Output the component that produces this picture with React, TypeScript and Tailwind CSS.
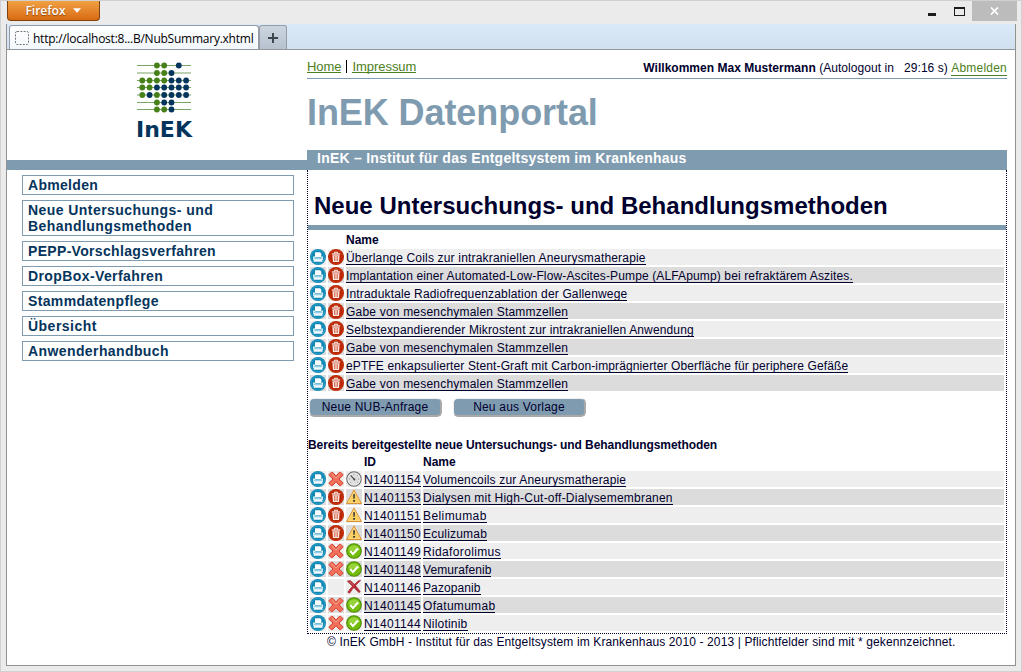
import React from "react";

const Printer = () => (
  <svg width="16" height="16" viewBox="0 0 16 16" className="block">
    <circle cx="8" cy="8" r="8" fill="#1186b3" />
    <circle cx="8" cy="8" r="6.9" fill="none" stroke="#2ba3cc" strokeWidth="0.8" />
    <path d="M5 3.2h5l1.3 1.3v3.6H5z" fill="#fff" />
    <path d="M3 7.4h2v1h6.3v-1h1.8v3.6H3z" fill="#d5edf6" />
    <path d="M3.6 9.6h8.8" stroke="#7fc4de" strokeWidth="0.8" />
    <path d="M4 10.8h8.2l.5 2H3.5z" fill="#f4fbfd" />
  </svg>
);

const Trash = () => (
  <svg width="16" height="16" viewBox="0 0 16 16" className="block">
    <circle cx="8" cy="8" r="8" fill="#b92505" />
    <circle cx="8" cy="8" r="7" fill="none" stroke="#cf3f17" strokeWidth="0.6" />
    <path d="M6.4 4.4V3.2h3.2v1.2" fill="none" stroke="#fff" strokeWidth="1" />
    <path d="M3.8 4.4h8.4v1.2H3.8z" fill="#fff" />
    <path d="M4.4 6.2h7.2l-.6 6.8H5z" fill="#fbe9e4" />
    <path d="M6.4 7l.2 5M8 7v5M9.6 7l-.2 5" stroke="#d4644a" strokeWidth="0.8" />
  </svg>
);

const Cross = () => (
  <svg width="16" height="16" viewBox="0 0 16 16" className="block">
    <path
      d="M1 3.6L3.4 1.2 5 1.6 8 5.2 11 1.6 12.6 1.2 15 3.6 14.4 5 10.9 8 14.4 11 15 12.4 12.6 14.8 11 14.2 8 10.8 5 14.2 3.4 14.8 1 12.4 1.6 11 5.1 8 1.6 5z"
      fill="#f0705c"
      stroke="#d8452f"
      strokeWidth="1"
      strokeLinejoin="round"
    />
    <path d="M3.5 3L8 7l4.5-4" fill="none" stroke="#f9a596" strokeWidth="0.8" />
  </svg>
);

const Gauge = () => (
  <svg width="16" height="16" viewBox="0 0 16 16" className="block">
    <circle cx="8" cy="8" r="7.2" fill="#dedede" stroke="#6f6f6f" strokeWidth="1.2" />
    <circle cx="8" cy="8" r="6.1" fill="none" stroke="#f6f6f6" strokeWidth="0.7" />
    <path d="M4.6 4.3L8.5 8.6" stroke="#4a4a4a" strokeWidth="1.2" />
    <circle cx="8.4" cy="8.5" r="1" fill="#444" />
    <path d="M8 2.6v1.1M13.2 8h-1.1M2.8 8h1.1M11.6 4.4l-.7.7M4.4 11.6l.7-.7M11.6 11.6l-.7-.7" stroke="#777" strokeWidth="0.8" />
  </svg>
);

const Warning = () => (
  <svg width="16" height="16" viewBox="0 0 16 16" className="block">
    <path d="M8 1.2L15.3 14.4H.7z" fill="#fccf5d" stroke="#dd9233" strokeWidth="1.1" strokeLinejoin="round" />
    <path d="M8 2.8L14 13.5H2z" fill="none" stroke="#fee6a4" strokeWidth="0.6" />
    <path d="M7.1 5.2h1.9l-.3 4.6H7.4zM7.1 10.9h1.9v1.8H7.1z" fill="#3c3c3c" />
  </svg>
);

const Check = () => (
  <svg width="16" height="16" viewBox="0 0 16 16" className="block">
    <circle cx="8" cy="8" r="7.3" fill="#74bd0c" stroke="#4c8d08" strokeWidth="1.1" />
    <path d="M2.2 7a6 6 0 0 1 11.6 0q-5.8 2.2-11.6 0z" fill="#96d43a" />
    <path d="M4.2 8l2.8 2.9 5-5.4" fill="none" stroke="#fff" strokeWidth="2.1" />
  </svg>
);

const Denied = () => (
  <svg width="16" height="16" viewBox="0 0 16 16" className="block">
    <path d="M1.4 2.2L4 1.6C6.5 3.2 11.5 8.4 14.2 12.8L13 13.6C9.6 10.4 5 5.6 1.4 2.2z" fill="#b3303a" stroke="#99212a" strokeWidth="0.7" strokeLinejoin="round" />
    <path d="M14.6 1.6L12.6 1.8C8.6 4.6 4.6 9.2 1.8 13.2L3.6 14.2C6.6 9.6 10 5.6 14.6 1.6z" fill="#c42b36" stroke="#a5222b" strokeWidth="0.7" strokeLinejoin="round" />
    <path d="M3.2 2.6C5 3.7 7 5.4 8 6.4" fill="none" stroke="#e08a8f" strokeWidth="0.6" />
  </svg>
);

const icons = { printer: Printer, trash: Trash, cross: Cross, gauge: Gauge, warning: Warning, check: Check, denied: Denied };
type IconName = keyof typeof icons;

const Logo = () => {
  const rows = ["  gg b ", "  ggb  ", "ggggbbb", "ggbbbbb", "gbgbbbb", "  gbb  ", "  ggb  "];
  const y = [3.5, 11, 18.5, 25.5, 33, 40.5, 47.5];
  return (
    <svg width="56" height="52" viewBox="0 0 56 52" className="block">
      {rows.map((row, r) => (
        <g key={r}>
          <path d={`M1 ${y[r]}h54`} stroke="#7ba468" strokeWidth="1.2" />
          {row.split("").map((c, i) =>
            c === " " ? null : <circle key={i} cx={6.3 + i * 7.3} cy={y[r]} r="2.9" fill={c === "g" ? "#468019" : "#05345c"} />
          )}
        </g>
      ))}
    </svg>
  );
};

const Cell = ({ icon, shade }: { icon?: IconName; shade: string }) => {
  const Icon = icon ? icons[icon] : null;
  return <div className={`h-4 w-4 shrink-0 ${shade}`}>{Icon && <Icon />}</div>;
};

const Link = ({ text, track }: { text: string; track: string }) => (
  <a className={`inline-block h-[15px] border-b border-[#00002e] leading-[17px] ${track}`}>{text}</a>
);

const shades = ["bg-[#eeeeee]", "bg-[#dcdcdc]"];

const drafts = [
  ["Überlange Coils zur intrakraniellen Aneurysmatherapie", "tracking-[0.18px]"],
  ["Implantation einer Automated-Low-Flow-Ascites-Pumpe (ALFApump) bei refraktärem Aszites.", "tracking-[0.13px]"],
  ["Intraduktale Radiofrequenzablation der Gallenwege", "tracking-[0.16px]"],
  ["Gabe von mesenchymalen Stammzellen", "tracking-[0.2px]"],
  ["Selbstexpandierender Mikrostent zur intrakraniellen Anwendung", "tracking-[0.135px]"],
  ["Gabe von mesenchymalen Stammzellen", "tracking-[0.2px]"],
  ["ePTFE enkapsulierter Stent-Graft mit Carbon-imprägnierter Oberfläche für periphere Gefäße", "tracking-[0.12px]"],
  ["Gabe von mesenchymalen Stammzellen", "tracking-[0.2px]"],
];

const submitted: { id: string; name: string; action?: IconName; state: IconName; track: string }[] = [
  { id: "N1401154", name: "Volumencoils zur Aneurysmatherapie", action: "cross", state: "gauge", track: "tracking-[0.17px]" },
  { id: "N1401153", name: "Dialysen mit High-Cut-off-Dialysemembranen", action: "trash", state: "warning", track: "tracking-[0.22px]" },
  { id: "N1401151", name: "Belimumab", action: "trash", state: "warning", track: "tracking-[0.42px]" },
  { id: "N1401150", name: "Eculizumab", action: "trash", state: "warning", track: "tracking-[0.2px]" },
  { id: "N1401149", name: "Ridaforolimus", action: "cross", state: "check", track: "tracking-[0.35px]" },
  { id: "N1401148", name: "Vemurafenib", action: "cross", state: "check", track: "tracking-[0.1px]" },
  { id: "N1401146", name: "Pazopanib", state: "denied", track: "tracking-[0.1px]" },
  { id: "N1401145", name: "Ofatumumab", action: "cross", state: "check", track: "tracking-[0.3px]" },
  { id: "N1401144", name: "Nilotinib", action: "cross", state: "check", track: "tracking-[0.2px]" },
];

const menu = [
  ["Abmelden", "tracking-[0.3px]"],
  ["Neue Untersuchungs- und Behandlungsmethoden", "tracking-[0.44px]"],
  ["PEPP-Vorschlagsverfahren", "tracking-[0.32px]"],
  ["DropBox-Verfahren", "tracking-[0.4px]"],
  ["Stammdatenpflege", "tracking-[0.35px]"],
  ["Übersicht", "tracking-[0.48px]"],
  ["Anwenderhandbuch", "tracking-[0.4px]"],
];

const Button = ({ text }: { text: string }) => (
  <button className="h-[19px] w-[133px] rounded-[5px] border border-r-2 border-b-2 border-t-[#f0f0f0] border-r-[#a9a9a9] border-b-[#a9a9a9] border-l-[#f0f0f0] bg-[#7f9bb0] text-center leading-4 tracking-[0.2px] whitespace-nowrap">
    {text}
  </button>
);

const TitleBar = () => (
  <div className="flex h-[23px] shrink-0 items-start justify-between pl-[6px]">
    <div className="flex h-5 w-[93px] items-center justify-center gap-[7px] rounded-b-[4px] border border-t-0 border-[#7c4310] bg-linear-to-b from-[#f0a142] to-[#d86a10] pr-px font-['Open_Sans',sans-serif] text-[12px] font-semibold text-white [text-shadow:0_1px_1px_#8a4508]">
      Firefox
      <svg width="8" height="5" viewBox="0 0 8 5"><path d="M0 .3h8L4 4.8z" fill="#fff" /></svg>
    </div>
    <div className="flex pr-1">
      <div className="flex h-5 w-[26px] items-end pb-[5px]"><div className="h-[3px] w-2 bg-[#1c1c1c]" /></div>
      <div className="mt-[6px] mr-[7px] h-[9px] w-[11px] border border-t-2 border-[#1c1c1c]" />
      <div className="flex h-5 w-[45px] items-center justify-center bg-[#bcbcbc]">
        <svg width="9" height="8" viewBox="0 0 9 8"><path d="M1 .5l7 7M8 .5l-7 7" stroke="#fff" strokeWidth="1.7" /></svg>
      </div>
    </div>
  </div>
);

const TabBar = () => (
  <div className="flex h-[26px] shrink-0 items-end border-b border-[#92979d] bg-linear-to-b from-[#dbe9f8] to-[#cfe0f0] pl-[2px]">
    <div className="flex h-6 w-[250px] items-center rounded-t-[3px] border border-b-0 border-[#969ca5] bg-linear-to-b from-white to-[#f3f8fd] pl-[5px] font-['Open_Sans',sans-serif] text-[12px] text-black">
      <svg width="14" height="14" viewBox="0 0 14 14" className="mr-1 shrink-0"><rect x=".5" y=".5" width="13" height="13" rx="1.5" fill="none" stroke="#777" strokeDasharray="2 1.3" /></svg>
      <span className="pt-0.5 tracking-[-0.24px] whitespace-nowrap">http://localhost:8...B/NubSummary.xhtml</span>
    </div>
    <div className="flex h-6 w-7 items-center justify-center rounded-t-[3px] border border-b-0 border-[#969ca5] bg-linear-to-b from-[#ccd5df] to-[#b7c2cf]">
      <svg width="10" height="10" viewBox="0 0 10 10"><path d="M0 5h10M5 0v10" stroke="#3f464e" strokeWidth="2" /></svg>
    </div>
  </div>
);

export default function App() {
  return (
    <div className="flex h-[672px] w-[1022px] flex-col overflow-hidden border border-[#d0d0d0] bg-[#ebebeb] font-['Liberation_Sans',Arial,sans-serif] text-[12px] text-[#00002e]">
      <TitleBar />
      <div className="mx-[5px] mb-[5px] flex min-h-0 flex-1 flex-col border border-t-0 border-[#929292] bg-white">
        <TabBar />
        <div className="flex min-h-0 flex-1">
          <aside className="w-[300px] shrink-0">
            <div className="flex h-[110px] flex-col items-start pt-3 pl-[129px]">
              <Logo />
              <div className="mt-[5px] font-['DejaVu_Sans',sans-serif] text-[22px] leading-[22px] font-bold text-[#05345c]">InEK</div>
            </div>
            <div className="h-[10px] bg-[#7f9bb0]" />
            <nav className="mt-[5px] ml-[15px] flex w-[272px] flex-col gap-[5px]">
              {menu.map(([label, track]) => (
                <a key={label} className={`border border-[#7f9bb0] py-px pr-10 pl-[5px] text-[14px] leading-4 font-bold text-[#05345c] ${track}`}>{label}</a>
              ))}
            </nav>
          </aside>
          <main className="w-[700px] shrink-0">
            <div className="flex h-[29px] items-start justify-between border-b border-[#7f9bb0] pt-[9px]">
              <div className="flex text-[13px] leading-4 tracking-[-0.05px] text-[#4c8022]">
                <a className="h-[14px] border-b">Home</a>
                <span className="mt-px mr-[5px] ml-[5px] h-[13px] w-px bg-black" />
                <a className="h-[14px] border-b">Impressum</a>
              </div>
              <div className="flex leading-[18px] whitespace-pre">
                <b className="tracking-[0.02px]">Willkommen Max Mustermann</b>
                <span className="tracking-[0.05px]"> (Autologout in   29:16 s) </span>
                <a className="h-[17px] border-b border-[#4c8022] tracking-[0.22px] text-[#4c8022]">Abmelden</a>
              </div>
            </div>
            <h1 className="h-[71px] pt-[13px] text-[36px] leading-[41px] font-bold tracking-[-0.08px] text-[#7f9bb0]">InEK Datenportal</h1>
            <div className="h-5 bg-[#7f9bb0] pl-[10px] text-[14px] leading-[17px] font-bold tracking-[0.24px] text-white">InEK – Institut für das Entgeltsystem im Krankenhaus</div>
            <section className="h-[464px] border border-t-0 border-dotted border-[#00002e]">
              <h2 className="h-[55px] pt-[22px] pl-[6px] text-[24px] leading-7 font-bold tracking-[0.01px]">Neue Untersuchungs- und Behandlungsmethoden</h2>
              <div className="h-[5px] bg-[#7f9bb0]" />
              <div className="mt-[2px] h-[17px] pl-[38px] leading-[17px] font-bold">Name</div>
              <div className="flex flex-col gap-[2px] pr-[2px] pl-[2px]">
                {drafts.map(([name, track], i) => (
                  <div key={i} className="flex h-4 gap-[2px]">
                    <Cell icon="printer" shade={shades[i % 2]} />
                    <Cell icon="trash" shade={shades[i % 2]} />
                    <div className={`flex-1 whitespace-nowrap ${shades[i % 2]}`}><Link text={name} track={track} /></div>
                  </div>
                ))}
              </div>
              <div className="mt-[7px] ml-[1px] flex gap-[11px]">
                <Button text="Neue NUB-Anfrage" />
                <Button text="Neu aus Vorlage" />
              </div>
              <div className="mt-5 h-[17px] leading-[17px] font-bold tracking-[-0.075px]">Bereits bereitgestellte neue Untersuchungs- und Behandlungsmethoden</div>
              <div className="flex h-[17px] pl-[56px] leading-[17px] font-bold">
                <span className="w-[59px]">ID</span>
                <span>Name</span>
              </div>
              <div className="flex flex-col gap-[2px] pr-[2px] pl-[2px]">
                {submitted.map((r, i) => (
                  <div key={r.id} className="flex h-4 gap-[2px]">
                    <Cell icon="printer" shade={shades[i % 2]} />
                    <Cell icon={r.action} shade={shades[i % 2]} />
                    <Cell icon={r.state} shade={shades[i % 2]} />
                    <div className={`w-[57px] shrink-0 ${shades[i % 2]}`}><Link text={r.id} track="tracking-[0.3px]" /></div>
                    <div className={`flex-1 whitespace-nowrap ${shades[i % 2]}`}><Link text={r.name} track={r.track} /></div>
                  </div>
                ))}
              </div>
            </section>
            <footer className="pl-5 leading-[17px] tracking-[0.125px] whitespace-nowrap">© InEK GmbH - Institut für das Entgeltsystem im Krankenhaus 2010 - 2013 | Pflichtfelder sind mit * gekennzeichnet.</footer>
          </main>
        </div>
      </div>
    </div>
  );
}
